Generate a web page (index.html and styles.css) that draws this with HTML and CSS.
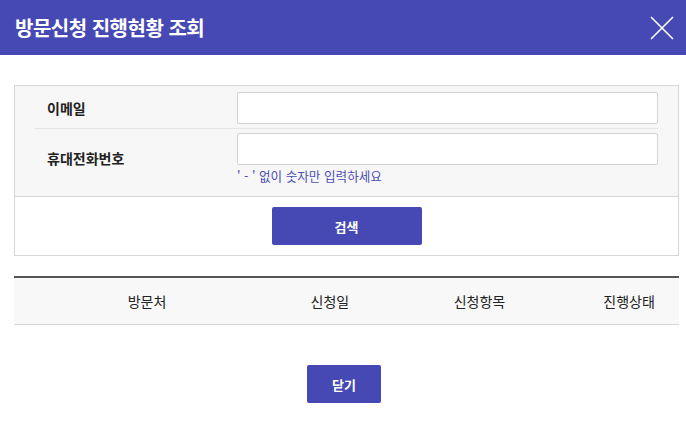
FILE: index.html
```html
<!DOCTYPE html>
<html lang="ko">
<head>
    <meta charset="UTF-8">
    <meta name="viewport" content="width=device-width, initial-scale=1.0">
    <title>방문신청 진행현황 조회</title>
    <link rel="stylesheet" href="styles.css">
</head>
<body>
    <div class="popup-header">
        <h1>방문신청 진행현황 조회</h1>
        <button class="close-btn" type="button" aria-label="닫기">
            <svg width="24" height="24" viewBox="0 0 24 24">
                <path d="M1 1 L23 23 M23 1 L1 23" stroke="#fff" stroke-width="1.6" fill="none"/>
            </svg>
        </button>
    </div>

    <div class="search-box">
        <div class="search-fields">
            <div class="field-row">
                <label class="field-label" for="email">이메일</label>
                <div class="field-input">
                    <input type="text" id="email">
                </div>
            </div>
            <div class="field-row">
                <label class="field-label" for="phone">휴대전화번호</label>
                <div class="field-input">
                    <input type="text" id="phone">
                    <p class="hint">' - ' 없이 숫자만 입력하세요</p>
                </div>
            </div>
        </div>
        <div class="search-actions">
            <button class="btn-primary btn-search" type="button">검색</button>
        </div>
    </div>

    <table class="result-table">
        <colgroup>
            <col style="width: 40%">
            <col style="width: 15%">
            <col style="width: 30%">
            <col style="width: 15%">
        </colgroup>
        <thead>
            <tr>
                <th>방문처</th>
                <th>신청일</th>
                <th>신청항목</th>
                <th>진행상태</th>
            </tr>
        </thead>
        <tbody></tbody>
    </table>

    <div class="bottom-actions">
        <button class="btn-primary btn-close" type="button">닫기</button>
    </div>
</body>
</html>
```

FILE: styles.css
```css
body {
    margin: 0;
    padding: 0;
    font-family: "Noto Sans CJK KR", "Noto Sans", sans-serif;
    color: #222;
    background: #fff;
}

.popup-header {
    height: 55px;
    background-color: #4649b4;
    display: flex;
    align-items: center;
    justify-content: space-between;
    padding: 0 12px 0 15px;
}

.popup-header h1 {
    margin: 0;
    font-size: 20px;
    font-weight: 700;
    color: #fff;
    letter-spacing: -0.5px;
}

.close-btn {
    background: none;
    border: 0;
    padding: 0;
    width: 24px;
    height: 24px;
    cursor: pointer;
}

.search-box {
    margin: 30px 7px 0 14px;
    border: 1px solid #d6d6da;
}

.search-fields {
    background-color: #f7f7f7;
    padding: 6px 20px 11px;
    border-bottom: 1px solid #d6d6da;
}

.field-row {
    display: flex;
    align-items: flex-start;
}

.field-row + .field-row {
    border-top: 1px solid #e4e4e4;
    margin-top: 4px;
    padding-top: 4px;
}

.field-label {
    width: 190px;
    padding-left: 12px;
    line-height: 32px;
    font-size: 14px;
    font-weight: 700;
    color: #222;
}

.field-row + .field-row .field-label {
    line-height: 50px;
}

.field-input {
    flex: 1;
}

.field-input input {
    display: block;
    box-sizing: border-box;
    width: 100%;
    height: 32px;
    border: 1px solid #d3d3d6;
    border-radius: 2px;
    background: #fff;
    margin: 0;
}

.hint {
    margin: 2px 0 0;
    font-size: 12.6px;
    line-height: 18px;
    color: #4c4fb6;
}

.search-actions {
    text-align: center;
    padding: 10px 0;
}

.btn-primary {
    background-color: #4649b4;
    color: #fff;
    border: 0;
    border-radius: 2px;
    font-family: inherit;
    font-size: 13px;
    font-weight: 700;
    cursor: pointer;
}

.btn-search {
    width: 150px;
    height: 38px;
}

.result-table {
    margin: 20px 7px 0 14px;
    width: 665px;
    border-collapse: collapse;
    border-top: 2px solid #555;
    table-layout: fixed;
}

.result-table th {
    height: 46px;
    background-color: #f8f8f8;
    border-bottom: 1px solid #d6d6da;
    font-size: 14px;
    font-weight: 400;
    color: #222;
    padding: 0;
}

.bottom-actions {
    text-align: center;
    margin-top: 40px;
    padding-left: 2px;
}

.btn-close {
    width: 74px;
    height: 38px;
}
```
